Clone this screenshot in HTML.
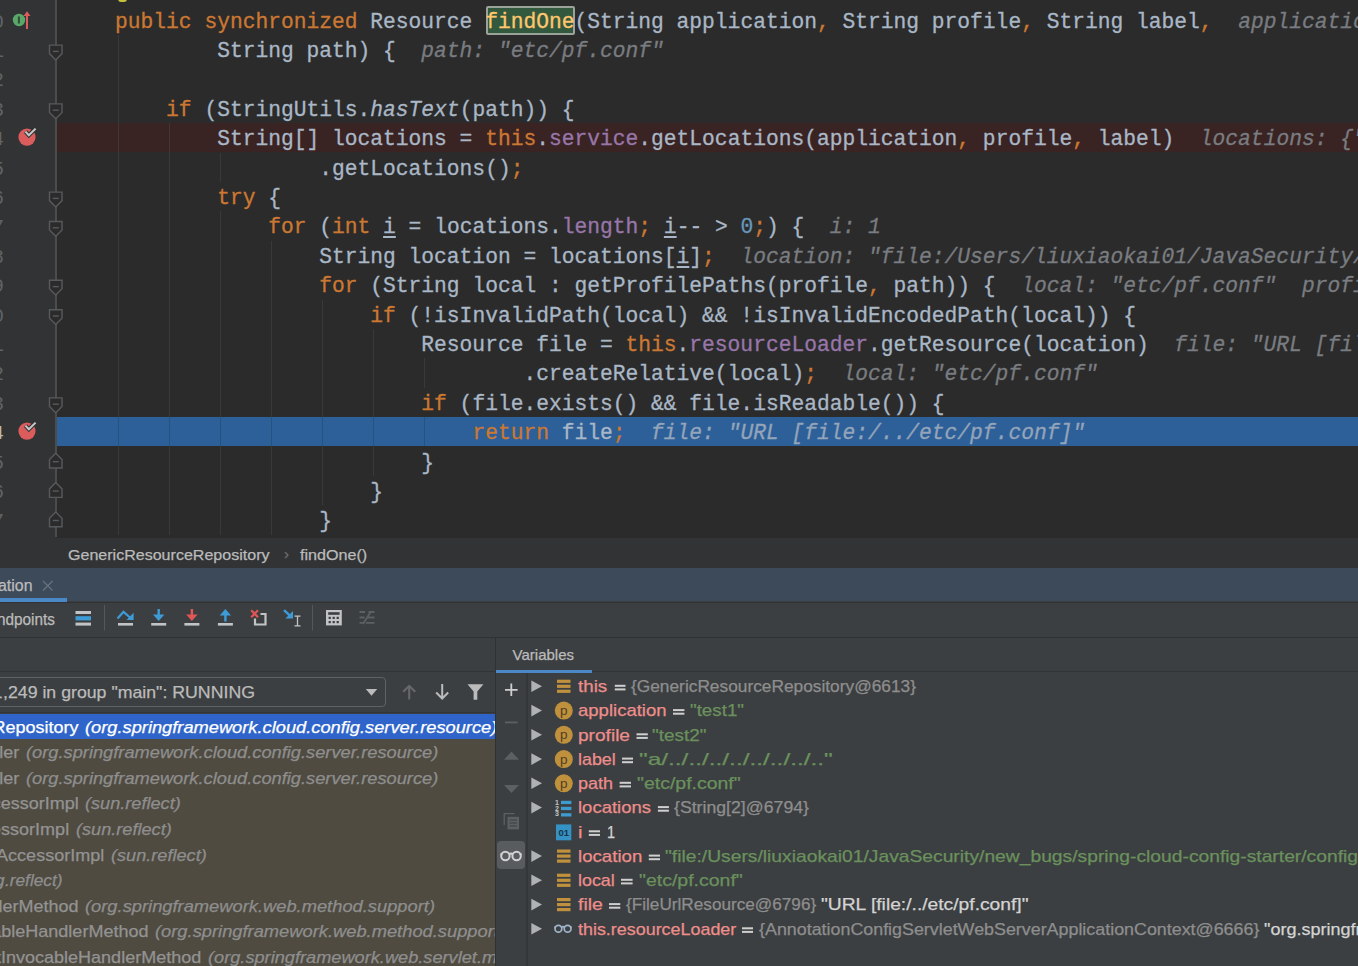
<!DOCTYPE html>
<html><head><meta charset="utf-8">
<style>
*{margin:0;padding:0;box-sizing:border-box}
html,body{width:1358px;height:966px;overflow:hidden;background:#3c3f41}
body{position:relative;font-family:"Liberation Sans",sans-serif}
.abs{position:absolute}
.t{position:absolute;white-space:pre;font-family:"Liberation Sans",sans-serif;-webkit-text-stroke:0.25px currentColor}
svg{position:absolute;overflow:visible}
#editor{position:absolute;left:0;top:0;width:1358px;height:538px;background:#2b2b2b;overflow:hidden}
#gutter{position:absolute;left:0;top:0;width:56px;height:538px;background:#313335}
.code{position:absolute;left:64.00px;white-space:pre;-webkit-text-stroke:0.3px currentColor;font-family:"Liberation Mono",monospace;font-size:21.28px;line-height:29.40px;color:#a9b7c6}
.k{color:#cc7832}.f{color:#9876aa}.n{color:#6897bb}.it{font-style:italic}
.decl{color:#ffc66d}
.u{text-decoration:underline;text-underline-offset:3px}
.h{color:#797c80;font-style:italic}
.hx{color:#94a4b9;font-style:italic}
.guide{position:absolute;width:1px;background:#393939}
.ln{position:absolute;left:-10.1px;width:14px;text-align:right;font-family:"Liberation Mono",monospace;font-size:20px;color:#606366}
</style></head><body>

<div id="editor"><div id="gutter"></div>
<div class="abs" style="left:57px;top:123.10px;width:1301px;height:29.40px;background:#3a2323"></div>
<div class="abs" style="left:56.3px;top:417.10px;width:1302px;height:29.40px;background:#2d6099"></div>
<div class="abs" style="left:485.8px;top:5.8px;width:89.6px;height:29.4px;background:#32593d;border:2px solid #9aa29a;border-radius:2px"></div>
<div class="abs" style="left:55px;top:0;width:1.6px;height:537px;background:#4a4c4e"></div>
<div class="guide" style="left:117.6px;top:34.90px;height:499.80px"></div>
<div class="guide" style="left:168.6px;top:123.10px;height:411.60px"></div>
<div class="guide" style="left:219.7px;top:152.50px;height:29.40px"></div>
<div class="guide" style="left:219.7px;top:211.30px;height:323.40px"></div>
<div class="guide" style="left:270.8px;top:240.70px;height:294.00px"></div>
<div class="guide" style="left:321.9px;top:299.50px;height:205.80px"></div>
<div class="guide" style="left:372.9px;top:328.90px;height:147.00px"></div>
<div class="guide" style="left:424.0px;top:358.30px;height:29.40px"></div>
<div class="guide" style="left:117.6px;top:417.10px;height:29.40px;background:#26527f"></div>
<div class="guide" style="left:168.6px;top:417.10px;height:29.40px;background:#26527f"></div>
<div class="guide" style="left:219.7px;top:417.10px;height:29.40px;background:#26527f"></div>
<div class="guide" style="left:270.8px;top:417.10px;height:29.40px;background:#26527f"></div>
<div class="guide" style="left:321.9px;top:417.10px;height:29.40px;background:#26527f"></div>
<div class="guide" style="left:372.9px;top:417.10px;height:29.40px;background:#26527f"></div>
<div class="guide" style="left:424.0px;top:417.10px;height:29.40px;background:#26527f"></div>
<div class="code" style="top:7.50px">    <span class="k">public synchronized </span>Resource <span class="decl">findOne</span>(String application<span class="k">,</span> String profile<span class="k">,</span> String label<span class="k">,</span>  <span class="h">application: "test1"</span></div>
<div class="code" style="top:36.90px">            String path) {  <span class="h">path: "etc/pf.conf"</span></div>
<div class="code" style="top:66.30px"></div>
<div class="code" style="top:95.70px">        <span class="k">if</span> (StringUtils.<span class="it">hasText</span>(path)) {</div>
<div class="code" style="top:125.10px">            String[] locations = <span class="k">this</span>.<span class="f">service</span>.getLocations(application<span class="k">,</span> profile<span class="k">,</span> label)  <span class="h">locations: {"file:/Users/liuxiaokai01/"}</span></div>
<div class="code" style="top:154.50px">                    .getLocations()<span class="k">;</span></div>
<div class="code" style="top:183.90px">            <span class="k">try</span> {</div>
<div class="code" style="top:213.30px">                <span class="k">for</span> (<span class="k">int</span> <span class="u">i</span> = locations.<span class="f">length</span><span class="k">;</span> <span class="u">i</span>-- &gt; <span class="n">0</span><span class="k">;</span>) {  <span class="h">i: 1</span></div>
<div class="code" style="top:242.70px">                    String location = locations[<span class="u">i</span>]<span class="k">;</span>  <span class="h">location: "file:/Users/liuxiaokai01/JavaSecurity/new_bugs"</span></div>
<div class="code" style="top:272.10px">                    <span class="k">for</span> (String local : getProfilePaths(profile<span class="k">,</span> path)) {  <span class="h">local: "etc/pf.conf"  profile: "test2"</span></div>
<div class="code" style="top:301.50px">                        <span class="k">if</span> (!isInvalidPath(local) &amp;&amp; !isInvalidEncodedPath(local)) {</div>
<div class="code" style="top:330.90px">                            Resource file = <span class="k">this</span>.<span class="f">resourceLoader</span>.getResource(location)  <span class="h">file: "URL [file:/../etc/pf.conf]"</span></div>
<div class="code" style="top:360.30px">                                    .createRelative(local)<span class="k">;</span>  <span class="h">local: "etc/pf.conf"</span></div>
<div class="code" style="top:389.70px">                            <span class="k">if</span> (file.exists() &amp;&amp; file.isReadable()) {</div>
<div class="code" style="top:419.10px">                                <span class="k">return</span> file<span class="k">;</span>  <span class="hx">file: "URL [file:/../etc/pf.conf]"</span></div>
<div class="code" style="top:448.50px">                            }</div>
<div class="code" style="top:477.90px">                        }</div>
<div class="code" style="top:507.30px">                    }</div>
<div class="ln" style="top:7.50px;line-height:29.40px">0</div>
<div class="ln" style="top:36.90px;line-height:29.40px">1</div>
<div class="ln" style="top:66.30px;line-height:29.40px">2</div>
<div class="ln" style="top:95.70px;line-height:29.40px">3</div>
<div class="ln" style="top:125.10px;line-height:29.40px">4</div>
<div class="ln" style="top:154.50px;line-height:29.40px">5</div>
<div class="ln" style="top:183.90px;line-height:29.40px">6</div>
<div class="ln" style="top:213.30px;line-height:29.40px">7</div>
<div class="ln" style="top:242.70px;line-height:29.40px">8</div>
<div class="ln" style="top:272.10px;line-height:29.40px">9</div>
<div class="ln" style="top:301.50px;line-height:29.40px">0</div>
<div class="ln" style="top:330.90px;line-height:29.40px">1</div>
<div class="ln" style="top:360.30px;line-height:29.40px">2</div>
<div class="ln" style="top:389.70px;line-height:29.40px">3</div>
<div class="ln" style="top:419.10px;line-height:29.40px;color:#b8b8b8">4</div>
<div class="ln" style="top:448.50px;line-height:29.40px">5</div>
<div class="ln" style="top:477.90px;line-height:29.40px">6</div>
<div class="ln" style="top:507.30px;line-height:29.40px">7</div>
<div class="abs" style="left:118px;top:-4px;width:9px;height:6px;background:#c9c13a;border-radius:0 0 3px 3px"></div>
<svg width="1358" height="537" style="left:0;top:0"><path d="M49.5,45.1 h12.5 v8.5 l-6.25,6.3 l-6.25,-6.3 z" fill="#2b2b2b" stroke="#575a5c" stroke-width="1.4"/><path d="M52.8,51.4 h6" stroke="#575a5c" stroke-width="1.4"/></svg>
<svg width="1358" height="537" style="left:0;top:0"><path d="M49.5,103.9 h12.5 v8.5 l-6.25,6.3 l-6.25,-6.3 z" fill="#2b2b2b" stroke="#575a5c" stroke-width="1.4"/><path d="M52.8,110.2 h6" stroke="#575a5c" stroke-width="1.4"/></svg>
<svg width="1358" height="537" style="left:0;top:0"><path d="M49.5,192.1 h12.5 v8.5 l-6.25,6.3 l-6.25,-6.3 z" fill="#2b2b2b" stroke="#575a5c" stroke-width="1.4"/><path d="M52.8,198.4 h6" stroke="#575a5c" stroke-width="1.4"/></svg>
<svg width="1358" height="537" style="left:0;top:0"><path d="M49.5,221.5 h12.5 v8.5 l-6.25,6.3 l-6.25,-6.3 z" fill="#2b2b2b" stroke="#575a5c" stroke-width="1.4"/><path d="M52.8,227.8 h6" stroke="#575a5c" stroke-width="1.4"/></svg>
<svg width="1358" height="537" style="left:0;top:0"><path d="M49.5,280.3 h12.5 v8.5 l-6.25,6.3 l-6.25,-6.3 z" fill="#2b2b2b" stroke="#575a5c" stroke-width="1.4"/><path d="M52.8,286.6 h6" stroke="#575a5c" stroke-width="1.4"/></svg>
<svg width="1358" height="537" style="left:0;top:0"><path d="M49.5,309.7 h12.5 v8.5 l-6.25,6.3 l-6.25,-6.3 z" fill="#2b2b2b" stroke="#575a5c" stroke-width="1.4"/><path d="M52.8,316.0 h6" stroke="#575a5c" stroke-width="1.4"/></svg>
<svg width="1358" height="537" style="left:0;top:0"><path d="M49.5,397.9 h12.5 v8.5 l-6.25,6.3 l-6.25,-6.3 z" fill="#2b2b2b" stroke="#575a5c" stroke-width="1.4"/><path d="M52.8,404.2 h6" stroke="#575a5c" stroke-width="1.4"/></svg>
<svg width="1358" height="537" style="left:0;top:0"><path d="M49.5,468.0 h12.5 v-8.5 l-6.25,-6.3 l-6.25,6.3 z" fill="#2b2b2b" stroke="#575a5c" stroke-width="1.4"/><path d="M52.8,461.7 h6" stroke="#575a5c" stroke-width="1.4"/></svg>
<svg width="1358" height="537" style="left:0;top:0"><path d="M49.5,497.4 h12.5 v-8.5 l-6.25,-6.3 l-6.25,6.3 z" fill="#2b2b2b" stroke="#575a5c" stroke-width="1.4"/><path d="M52.8,491.1 h6" stroke="#575a5c" stroke-width="1.4"/></svg>
<svg width="1358" height="537" style="left:0;top:0"><path d="M49.5,526.8 h12.5 v-8.5 l-6.25,-6.3 l-6.25,6.3 z" fill="#2b2b2b" stroke="#575a5c" stroke-width="1.4"/><path d="M52.8,520.5 h6" stroke="#575a5c" stroke-width="1.4"/></svg>
<svg width="60" height="537" style="left:0;top:0"><circle cx="27" cy="137.1" r="8.6" fill="#db5c5c"/><path d="M25.5,131.6 l3.3,3.6 l6.8,-6.6" fill="none" stroke="#313335" stroke-width="4.2"/><path d="M25.5,131.6 l3.3,3.6 l6.8,-6.6" fill="none" stroke="#c8c8c8" stroke-width="2"/></svg>
<svg width="60" height="537" style="left:0;top:0"><circle cx="27" cy="431.1" r="8.6" fill="#db5c5c"/><path d="M25.5,425.6 l3.3,3.6 l6.8,-6.6" fill="none" stroke="#313335" stroke-width="4.2"/><path d="M25.5,425.6 l3.3,3.6 l6.8,-6.6" fill="none" stroke="#c8c8c8" stroke-width="2"/></svg>
<svg width="60" height="60" style="left:0;top:0"><circle cx="19" cy="20" r="6.2" fill="#59a869"/><path d="M18.9,16.5 v7" stroke="#2e4d33" stroke-width="2"/><path d="M27,29 v-15" stroke="#db5c5c" stroke-width="2"/><path d="M23.5,16 l3.5,-4.8 l3.5,4.8 z" fill="#db5c5c"/></svg>
</div>
<div class="abs" style="left:0;top:538px;width:1358px;height:30px;background:#313335"></div>
<div class="abs" style="left:0;top:568px;width:1358px;height:33px;background:#3d4a5a"></div>
<div class="abs" style="left:0;top:601.5px;width:1358px;height:1.3px;background:#303234"></div>
<div class="abs" style="left:0;top:598.3px;width:67px;height:4.2px;background:#4a88c7"></div>
<div class="abs" style="left:0;top:602.8px;width:1358px;height:34.5px;background:#3c3f41"></div>
<div class="abs" style="left:0;top:637px;width:1358px;height:1px;background:#2f3133"></div>
<div class="abs" style="left:0;top:671px;width:495px;height:1px;background:#323435"></div>
<div class="abs" style="left:-6px;top:676.5px;width:392px;height:30px;border:1.2px solid #5f6264;border-radius:4px"></div>
<div class="abs" style="left:0;top:713.90px;width:495px;height:252.10px;background:#4f4b41"></div>
<div class="abs" style="left:0;top:711.5px;width:495px;height:1.5px;background:#333537"></div>
<div class="abs" style="left:0;top:713.90px;width:495px;height:25.52px;background:#2f65ca"></div>
<div class="abs" style="left:495px;top:638px;width:1px;height:328px;background:#2f3133"></div>
<div class="abs" style="left:496px;top:638px;width:862px;height:328px;background:#3c3f41"></div>
<div class="abs" style="left:496px;top:670px;width:96px;height:3px;background:#4a88c7"></div>
<div class="abs" style="left:592px;top:671px;width:766px;height:1px;background:#323435"></div>
<div class="abs" style="left:526px;top:673px;width:2px;height:293px;background:#343638"></div>
<div class="abs" style="left:497.2px;top:841.4px;width:27.8px;height:27.5px;border-radius:4px;background:#585c5f"></div>
<div class="abs" style="left:0;top:0;width:495px;height:966px;overflow:hidden">
<div class="t" style="right:416.7px;top:714.90px;height:25.52px;line-height:25.52px;font-size:17px;color:#ffffff;transform:scaleX(1.06);transform-origin:100% 0">findOne:131, GenericResourceRepository</div>
<div class="t" style="right:475.8px;top:740.42px;height:25.52px;line-height:25.52px;font-size:17px;color:#939393;transform:scaleX(1.06);transform-origin:100% 0">getLocations:1, EnvironmentController</div>
<div class="t" style="right:475.8px;top:765.94px;height:25.52px;line-height:25.52px;font-size:17px;color:#939393;transform:scaleX(1.06);transform-origin:100% 0">getLocations:1, EnvironmentController</div>
<div class="t" style="right:416.2px;top:791.46px;height:25.52px;line-height:25.52px;font-size:17px;color:#939393;transform:scaleX(1.06);transform-origin:100% 0">invoke0:-1, NativeMethodAccessorImpl</div>
<div class="t" style="right:426.0px;top:816.98px;height:25.52px;line-height:25.52px;font-size:17px;color:#939393;transform:scaleX(1.06);transform-origin:100% 0">invoke:62, NativeMethodAccessorImpl</div>
<div class="t" style="right:390.8px;top:842.50px;height:25.52px;line-height:25.52px;font-size:17px;color:#939393;transform:scaleX(1.06);transform-origin:100% 0">invoke:43, DelegatingMethodAccessorImpl</div>
<div class="t" style="right:490.5px;top:868.02px;height:25.52px;line-height:25.52px;font-size:17px;font-style:italic;color:#8e8e8e;transform:scaleX(1.07);transform-origin:100% 0">(java.lang</div>
<div class="t" style="right:416.2px;top:893.54px;height:25.52px;line-height:25.52px;font-size:17px;color:#939393;transform:scaleX(1.06);transform-origin:100% 0">doInvoke:205, InvocableHandlerMethod</div>
<div class="t" style="right:346.5px;top:919.06px;height:25.52px;line-height:25.52px;font-size:17px;color:#939393;transform:scaleX(1.06);transform-origin:100% 0">invokeForRequest:133, InvocableHandlerMethod</div>
<div class="t" style="right:293.5px;top:944.58px;height:25.52px;line-height:25.52px;font-size:17px;color:#939393;transform:scaleX(1.06);transform-origin:100% 0">invokeAndHandle:97, ServletInvocableHandlerMethod</div>
<div class="t" style="left:84.80px;top:714.90px;height:25.52px;line-height:25.52px;font-size:17px;color:#ffffff;font-style:italic;transform:scaleX(1.0740);transform-origin:0 0;">(org.springframework.cloud.config.server.resource)</div>
<div class="t" style="left:25.70px;top:740.42px;height:25.52px;line-height:25.52px;font-size:17px;color:#8e8e8e;font-style:italic;transform:scaleX(1.0740);transform-origin:0 0;">(org.springframework.cloud.config.server.resource)</div>
<div class="t" style="left:25.70px;top:765.94px;height:25.52px;line-height:25.52px;font-size:17px;color:#8e8e8e;font-style:italic;transform:scaleX(1.0740);transform-origin:0 0;">(org.springframework.cloud.config.server.resource)</div>
<div class="t" style="left:85.30px;top:791.46px;height:25.52px;line-height:25.52px;font-size:17px;color:#8e8e8e;font-style:italic;transform:scaleX(1.0663);transform-origin:0 0;">(sun.reflect)</div>
<div class="t" style="left:75.50px;top:816.98px;height:25.52px;line-height:25.52px;font-size:17px;color:#8e8e8e;font-style:italic;transform:scaleX(1.0663);transform-origin:0 0;">(sun.reflect)</div>
<div class="t" style="left:110.70px;top:842.50px;height:25.52px;line-height:25.52px;font-size:17px;color:#8e8e8e;font-style:italic;transform:scaleX(1.0663);transform-origin:0 0;">(sun.reflect)</div>
<div class="t" style="left:4.50px;top:868.02px;height:25.52px;line-height:25.52px;font-size:17px;color:#8e8e8e;font-style:italic;transform:scaleX(1.0143);transform-origin:0 0;">.reflect)</div>
<div class="t" style="left:85.30px;top:893.54px;height:25.52px;line-height:25.52px;font-size:17px;color:#8e8e8e;font-style:italic;transform:scaleX(1.0768);transform-origin:0 0;">(org.springframework.web.method.support)</div>
<div class="t" style="left:155.00px;top:919.06px;height:25.52px;line-height:25.52px;font-size:17px;color:#8e8e8e;font-style:italic;transform:scaleX(1.0768);transform-origin:0 0;">(org.springframework.web.method.support)</div>
<div class="t" style="left:208.00px;top:944.58px;height:25.52px;line-height:25.52px;font-size:17px;color:#8e8e8e;font-style:italic;transform:scaleX(1.07);transform-origin:0 0;">(org.springframework.web.servlet.mvc.method.annotation)</div>
</div>
<div class="t" style="left:68.00px;top:538.50px;height:31.00px;line-height:31.00px;font-size:15px;color:#bbbbbb;transform:scaleX(1.0694);transform-origin:0 0;">GenericResourceRepository</div>
<div class="t" style="left:284.00px;top:538.50px;height:30.00px;line-height:30.00px;font-size:15px;color:#6e6e6e;">›</div>
<div class="t" style="left:300.30px;top:538.50px;height:31.00px;line-height:31.00px;font-size:15px;color:#bbbbbb;transform:scaleX(1.0747);transform-origin:0 0;">findOne()</div>
<div class="t" style="left:-2.00px;top:568.80px;height:33.00px;line-height:33.00px;font-size:16px;color:#bbbbbb;transform:scaleX(0.9941);transform-origin:0 0;">ation</div>
<div class="t" style="left:-3.00px;top:602.00px;height:35.00px;line-height:35.00px;font-size:16px;color:#bbbbbb;transform:scaleX(0.9587);transform-origin:0 0;">ndpoints</div>
<div class="t" style="left:2.50px;top:677.50px;height:30.00px;line-height:30.00px;font-size:17px;color:#bbbbbb;transform:scaleX(1.0427);transform-origin:0 0;">,249 in group "main": RUNNING</div>
<div class="t" style="left:-7.00px;top:677.50px;height:30.00px;line-height:30.00px;font-size:17px;color:#bbbbbb;">1</div>
<div class="t" style="left:512.60px;top:638.00px;height:33.00px;line-height:33.00px;font-size:15px;color:#bbbbbb;">Variables</div>
<div class="t" style="left:578.00px;top:675.20px;height:24.25px;line-height:24.25px;font-size:17px;color:#ee8e8c;transform:scaleX(1.1032);transform-origin:0 0;">this</div>
<div class="t" style="left:631.00px;top:675.20px;height:24.25px;line-height:24.25px;font-size:17px;color:#8e8e8e;transform:scaleX(1.0180);transform-origin:0 0;">{GenericResourceRepository@6613}</div>
<div class="t" style="left:578.00px;top:699.45px;height:24.25px;line-height:24.25px;font-size:17px;color:#ee8e8c;transform:scaleX(1.0900);transform-origin:0 0;">application</div>
<div class="t" style="left:690.30px;top:699.45px;height:24.25px;line-height:24.25px;font-size:17px;color:#6a915d;transform:scaleX(1.1034);transform-origin:0 0;">"test1"</div>
<div class="t" style="left:578.00px;top:723.70px;height:24.25px;line-height:24.25px;font-size:17px;color:#ee8e8c;transform:scaleX(1.1228);transform-origin:0 0;">profile</div>
<div class="t" style="left:652.00px;top:723.70px;height:24.25px;line-height:24.25px;font-size:17px;color:#6a915d;transform:scaleX(1.1137);transform-origin:0 0;">"test2"</div>
<div class="t" style="left:578.00px;top:747.95px;height:24.25px;line-height:24.25px;font-size:17px;color:#ee8e8c;transform:scaleX(1.0495);transform-origin:0 0;">label</div>
<div class="t" style="left:639.00px;top:747.95px;height:24.25px;line-height:24.25px;font-size:17px;color:#6a915d;transform:scaleX(1.4367);transform-origin:0 0;">"a/../../../../../../../.."</div>
<div class="t" style="left:578.00px;top:772.20px;height:24.25px;line-height:24.25px;font-size:17px;color:#ee8e8c;transform:scaleX(1.0576);transform-origin:0 0;">path</div>
<div class="t" style="left:636.50px;top:772.20px;height:24.25px;line-height:24.25px;font-size:17px;color:#6a915d;transform:scaleX(1.1457);transform-origin:0 0;">"etc/pf.conf"</div>
<div class="t" style="left:578.00px;top:796.45px;height:24.25px;line-height:24.25px;font-size:17px;color:#ee8e8c;transform:scaleX(1.0878);transform-origin:0 0;">locations</div>
<div class="t" style="left:674.00px;top:796.45px;height:24.25px;line-height:24.25px;font-size:17px;color:#8e8e8e;transform:scaleX(1.0405);transform-origin:0 0;">{String[2]@6794}</div>
<div class="t" style="left:578.00px;top:820.70px;height:24.25px;line-height:24.25px;font-size:17px;color:#ee8e8c;transform:scaleX(1.1901);transform-origin:0 0;">i</div>
<div class="t" style="left:606.70px;top:820.70px;height:24.25px;line-height:24.25px;font-size:17px;color:#d4d4d4;transform:scaleX(0.8554);transform-origin:0 0;">1</div>
<div class="t" style="left:578.00px;top:844.95px;height:24.25px;line-height:24.25px;font-size:17px;color:#ee8e8c;transform:scaleX(1.0971);transform-origin:0 0;">location</div>
<div class="t" style="left:665.00px;top:844.95px;height:24.25px;line-height:24.25px;font-size:17px;color:#6a915d;transform:scaleX(1.1329);transform-origin:0 0;">"file:/Users/liuxiaokai01/JavaSecurity/new_bugs/spring-cloud-config-starter/config</div>
<div class="t" style="left:578.00px;top:869.20px;height:24.25px;line-height:24.25px;font-size:17px;color:#ee8e8c;transform:scaleX(1.0524);transform-origin:0 0;">local</div>
<div class="t" style="left:639.00px;top:869.20px;height:24.25px;line-height:24.25px;font-size:17px;color:#6a915d;transform:scaleX(1.1468);transform-origin:0 0;">"etc/pf.conf"</div>
<div class="t" style="left:578.00px;top:893.45px;height:24.25px;line-height:24.25px;font-size:17px;color:#ee8e8c;transform:scaleX(1.1410);transform-origin:0 0;">file</div>
<div class="t" style="left:625.50px;top:893.45px;height:24.25px;line-height:24.25px;font-size:17px;color:#8e8e8e;transform:scaleX(1.0101);transform-origin:0 0;">{FileUrlResource@6796}</div>
<div class="t" style="left:820.50px;top:893.45px;height:24.25px;line-height:24.25px;font-size:17px;color:#d4d4d4;transform:scaleX(1.1314);transform-origin:0 0;">"URL [file:/../etc/pf.conf]"</div>
<div class="t" style="left:578.00px;top:917.70px;height:24.25px;line-height:24.25px;font-size:17px;color:#ee8e8c;transform:scaleX(1.0535);transform-origin:0 0;">this.resourceLoader</div>
<div class="t" style="left:759.00px;top:917.70px;height:24.25px;line-height:24.25px;font-size:17px;color:#8e8e8e;transform:scaleX(1.0507);transform-origin:0 0;">{AnnotationConfigServletWebServerApplicationContext@6666}</div>
<div class="t" style="left:1264.00px;top:917.70px;height:24.25px;line-height:24.25px;font-size:17px;color:#d4d4d4;transform:scaleX(1.06);transform-origin:0 0;">"org.springframework.boot</div>
<svg width="1358" height="966" style="left:0;top:0">
<rect x="75.5" y="611" width="15.5" height="3" fill="#c2c3c4"/><rect x="75.5" y="616.2" width="15.5" height="4.2" fill="#3d9bd6"/><rect x="75.5" y="622.6" width="15.5" height="3" fill="#c2c3c4"/>
<path d="M43,581 L52.5,590.5 M52.5,581 L43,590.5" stroke="#68737e" stroke-width="1.2"/>
<rect x="104" y="605" width="1" height="25.5" fill="#55585a"/><rect x="312" y="605" width="1" height="25.5" fill="#55585a"/>
<path d="M117.5,618.5 L123.5,611.8 L130,617.5" fill="none" stroke="#3d9bd6" stroke-width="2.2"/><path d="M126.5,620 L133.6,620 L133.6,612.8 z" fill="#3d9bd6"/>
<rect x="118" y="623" width="15" height="2.6" fill="#c2c3c4"/>
<rect x="157.5" y="609" width="2.4" height="7" fill="#3d9bd6"/><path d="M153.0,614.5 h11.4 l-5.7,6.5 z" fill="#3d9bd6"/><rect x="151.2" y="623" width="15" height="2.6" fill="#c2c3c4"/>
<rect x="190.7" y="609" width="2.4" height="7" fill="#e05555"/><path d="M186.2,614.5 h11.4 l-5.7,6.5 z" fill="#e05555"/><rect x="184.4" y="623" width="15" height="2.6" fill="#c2c3c4"/>
<rect x="224.2" y="614" width="2.4" height="7.5" fill="#3d9bd6"/><path d="M219.7,615.5 h11.4 l-5.7,-6.5 z" fill="#3d9bd6"/><rect x="217.9" y="623" width="15" height="2.6" fill="#c2c3c4"/>
<path d="M255,618.5 V624.5 H265.5 V614 H260.5" fill="none" stroke="#c2c3c4" stroke-width="2.2"/>
<path d="M251.2,610.3 L258,617.2 M258,610.3 L251.2,617.2" stroke="#e05555" stroke-width="2.2"/>
<path d="M284,610.2 L290.5,616.2" stroke="#3d9bd6" stroke-width="2.4"/><path d="M293,611 V618.6 H285.4 z" fill="#3d9bd6"/>
<path d="M297.5,616.5 V625.5 M294.5,616.2 h6 M294.5,625.8 h6" stroke="#c2c3c4" stroke-width="1.3"/>
<rect x="326" y="610" width="15.8" height="15.4" fill="#c2c3c4"/><rect x="328.2" y="612.2" width="11.4" height="2.6" fill="#3c3f41"/>
<rect x="328.6" y="616.8" width="2.2" height="2.2" fill="#3c3f41"/>
<rect x="332.6" y="616.8" width="2.2" height="2.2" fill="#3c3f41"/>
<rect x="336.6" y="616.8" width="2.2" height="2.2" fill="#3c3f41"/>
<rect x="328.6" y="621.0" width="2.2" height="2.2" fill="#3c3f41"/>
<rect x="332.6" y="621.0" width="2.2" height="2.2" fill="#3c3f41"/>
<rect x="336.6" y="621.0" width="2.2" height="2.2" fill="#3c3f41"/>
<path d="M359.5,612 h5.5 M359.5,617.5 h5 M359.5,622.8 h4.5 M368.5,612 h6 M367,617.5 h7.5 M366,622.8 h8.5 M371,611.5 L363,624" stroke="#5d6063" stroke-width="1.8" fill="none"/>
<path d="M365.8,689 h11.4 l-5.7,6.7 z" fill="#bbbbbb"/>
<path d="M409.2,685.8 V699.5 M403.2,691.8 L409.2,685.8 L415.2,691.8" fill="none" stroke="#68696a" stroke-width="2"/>
<path d="M442.2,684 V698.5 M436.2,692.5 L442.2,698.5 L448.2,692.5" fill="none" stroke="#bbbbbb" stroke-width="2"/>
<path d="M467.5,684.2 H483.4 L477.3,691.5 V699.8 H473.6 V691.5 z" fill="#bbbbbb"/>
<path d="M511.3,683.5 V696 M505,689.8 H517.6" stroke="#cfcfcf" stroke-width="1.8"/>
<rect x="505" y="721.5" width="12.6" height="1.8" fill="#5d6063"/>
<path d="M504,759.8 H519 L511.5,751.6 z" fill="#5d6063"/><path d="M504,784.9 H519 L511.5,793 z" fill="#5d6063"/>
<path d="M504.2,825 V813.6 H514.5" fill="none" stroke="#5d6063" stroke-width="1.3"/><rect x="507.5" y="816.8" width="11.5" height="12.5" fill="#5d6063"/><path d="M509.5,820 h7.5 M509.5,823 h7.5 M509.5,826 h7.5" stroke="#3c3f41" stroke-width="1"/>
<circle cx="505.4" cy="856.0" r="4.2" fill="none" stroke="#d2d2d2" stroke-width="2.0"/><circle cx="516.6" cy="856.0" r="4.2" fill="none" stroke="#d2d2d2" stroke-width="2.0"/><path d="M509.4,854.4 q1.6,-2 3.2,0 M501.2,855.2 l0.5,-2 M520.8,855.2 l-0.5,-2" fill="none" stroke="#d2d2d2" stroke-width="2.0"/>
<path d="M531.3,680.5 V692.1 L542,686.3 z" fill="#afb1b3"/>
<path d="M531.3,704.8 V716.4 L542,710.6 z" fill="#afb1b3"/>
<path d="M531.3,729.0 V740.6 L542,734.8 z" fill="#afb1b3"/>
<path d="M531.3,753.3 V764.9 L542,759.1 z" fill="#afb1b3"/>
<path d="M531.3,777.5 V789.1 L542,783.3 z" fill="#afb1b3"/>
<path d="M531.3,801.8 V813.4 L542,807.6 z" fill="#afb1b3"/>
<path d="M531.3,850.3 V861.9 L542,856.1 z" fill="#afb1b3"/>
<path d="M531.3,874.5 V886.1 L542,880.3 z" fill="#afb1b3"/>
<path d="M531.3,898.8 V910.4 L542,904.6 z" fill="#afb1b3"/>
<path d="M531.3,923.0 V934.6 L542,928.8 z" fill="#afb1b3"/>
<rect x="557.0" y="679.7" width="13.5" height="3.2" fill="#c0913d"/><rect x="557.0" y="684.7" width="13.5" height="3.2" fill="#c0913d"/><rect x="557.0" y="689.7" width="13.5" height="3.2" fill="#c0913d"/>
<rect x="557.0" y="849.5" width="13.5" height="3.2" fill="#c0913d"/><rect x="557.0" y="854.5" width="13.5" height="3.2" fill="#c0913d"/><rect x="557.0" y="859.5" width="13.5" height="3.2" fill="#c0913d"/>
<rect x="557.0" y="873.7" width="13.5" height="3.2" fill="#c0913d"/><rect x="557.0" y="878.7" width="13.5" height="3.2" fill="#c0913d"/><rect x="557.0" y="883.7" width="13.5" height="3.2" fill="#c0913d"/>
<rect x="557.0" y="898.0" width="13.5" height="3.2" fill="#c0913d"/><rect x="557.0" y="903.0" width="13.5" height="3.2" fill="#c0913d"/><rect x="557.0" y="908.0" width="13.5" height="3.2" fill="#c0913d"/>
<circle cx="563.8" cy="710.6" r="9" fill="#c0913d"/>
<text x="563.8" y="715.1" text-anchor="middle" font-family="Liberation Sans" font-size="13.5" fill="#4f3f22">p</text>
<circle cx="563.8" cy="734.8" r="9" fill="#c0913d"/>
<text x="563.8" y="739.3" text-anchor="middle" font-family="Liberation Sans" font-size="13.5" fill="#4f3f22">p</text>
<circle cx="563.8" cy="759.1" r="9" fill="#c0913d"/>
<text x="563.8" y="763.6" text-anchor="middle" font-family="Liberation Sans" font-size="13.5" fill="#4f3f22">p</text>
<circle cx="563.8" cy="783.3" r="9" fill="#c0913d"/>
<text x="563.8" y="787.8" text-anchor="middle" font-family="Liberation Sans" font-size="13.5" fill="#4f3f22">p</text>
<rect x="561" y="800.8" width="10.4" height="3.3" fill="#3d9bd0"/><rect x="561" y="806.8" width="10.4" height="3.3" fill="#3d9bd0"/><rect x="561" y="813.2" width="10.4" height="3.3" fill="#3d9bd0"/>
<text x="555" y="805.0" font-family="Liberation Sans" font-weight="bold" font-size="7" fill="#c4c4c4">1</text>
<text x="555" y="810.7" font-family="Liberation Sans" font-weight="bold" font-size="7" fill="#c4c4c4">2</text>
<text x="555" y="816.4" font-family="Liberation Sans" font-weight="bold" font-size="7" fill="#c4c4c4">3</text>
<rect x="556" y="824.4" width="15.3" height="15.9" fill="#3592c4"/><text x="563.7" y="835.8" text-anchor="middle" font-family="Liberation Sans" font-weight="bold" font-size="9.5" fill="#1d3447">01</text>
<circle cx="558.4" cy="928.8" r="3.4" fill="none" stroke="#9fb4c8" stroke-width="1.7"/><circle cx="567.6" cy="928.8" r="3.4" fill="none" stroke="#9fb4c8" stroke-width="1.7"/><path d="M561.7,927.5 q1.3,-2 2.6,0 M555.0,928.1 l0.4,-2 M571.0,928.1 l-0.4,-2" fill="none" stroke="#9fb4c8" stroke-width="1.7"/>
<rect x="614.8" y="684.8" width="10.7" height="2" fill="#cfcfcf"/><rect x="614.8" y="688.4" width="10.7" height="2" fill="#cfcfcf"/>
<rect x="673.0" y="709.1" width="11.4" height="2" fill="#cfcfcf"/><rect x="673.0" y="712.7" width="11.4" height="2" fill="#cfcfcf"/>
<rect x="636.5" y="733.3" width="11.3" height="2" fill="#cfcfcf"/><rect x="636.5" y="736.9" width="11.3" height="2" fill="#cfcfcf"/>
<rect x="622.0" y="757.6" width="11.0" height="2" fill="#cfcfcf"/><rect x="622.0" y="761.2" width="11.0" height="2" fill="#cfcfcf"/>
<rect x="619.6" y="781.8" width="11.4" height="2" fill="#cfcfcf"/><rect x="619.6" y="785.4" width="11.4" height="2" fill="#cfcfcf"/>
<rect x="657.9" y="806.1" width="11.0" height="2" fill="#cfcfcf"/><rect x="657.9" y="809.7" width="11.0" height="2" fill="#cfcfcf"/>
<rect x="588.8" y="830.3" width="11.2" height="2" fill="#cfcfcf"/><rect x="588.8" y="833.9" width="11.2" height="2" fill="#cfcfcf"/>
<rect x="648.8" y="854.6" width="11.2" height="2" fill="#cfcfcf"/><rect x="648.8" y="858.2" width="11.2" height="2" fill="#cfcfcf"/>
<rect x="621.0" y="878.8" width="11.6" height="2" fill="#cfcfcf"/><rect x="621.0" y="882.4" width="11.6" height="2" fill="#cfcfcf"/>
<rect x="609.0" y="903.1" width="11.3" height="2" fill="#cfcfcf"/><rect x="609.0" y="906.7" width="11.3" height="2" fill="#cfcfcf"/>
<rect x="742.0" y="927.3" width="11.0" height="2" fill="#cfcfcf"/><rect x="742.0" y="930.9" width="11.0" height="2" fill="#cfcfcf"/>
</svg>
</body></html>
